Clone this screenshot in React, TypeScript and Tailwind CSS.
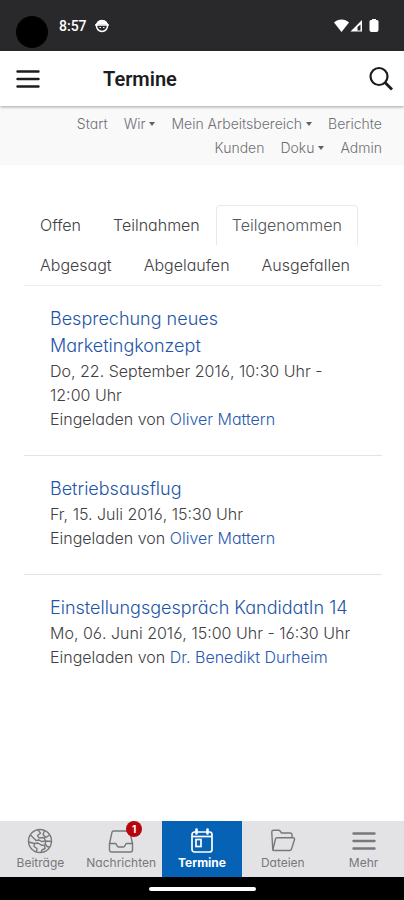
import type { ReactNode } from 'react';

const menu = [
  { label: 'Start' },
  { label: 'Wir', dropdown: true },
  { label: 'Mein Arbeitsbereich', dropdown: true },
  { label: 'Berichte' },
  { label: 'Kunden' },
  { label: 'Doku', dropdown: true },
  { label: 'Admin' },
];

const tabs = ['Offen', 'Teilnahmen', 'Teilgenommen', 'Abgesagt', 'Abgelaufen', 'Ausgefallen'];

const events = [
  { title: 'Besprechung neues Marketingkonzept', date: 'Do, 22. September 2016, 10:30 Uhr - 12:00 Uhr', host: 'Oliver Mattern' },
  { title: 'Betriebsausflug', date: 'Fr, 15. Juli 2016, 15:30 Uhr', host: 'Oliver Mattern' },
  { title: 'Einstellungsgespräch KandidatIn 14', date: 'Mo, 06. Juni 2016, 15:00 Uhr - 16:30 Uhr', host: 'Dr. Benedikt Durheim' },
];

function GlobeIcon() {
  return (
    <svg width="26" height="26" viewBox="0 0 26 26" fill="none" stroke="currentColor" strokeWidth="1.4" strokeLinejoin="round">
      <circle cx="13" cy="13" r="11.5" />
      <path d="M11 1.800l2.500 3.400-3 2.300 1.500 2.500 5-.5 1.500 3.500-4 .5-2.500-1.500-3 .5L6 9.500 3.500 7M17.500 2.500l-1.500 4 3 3 3.500-2.500" />
      <path d="M24.400 13.500l-4.900-.5-1.500 2.500 2 3 2.500.5M1.600 14l5.900 1.500 3.500-.5 3 2 3.500.5.5 3-3 1.500-1 2.400M7.500 15.500l-.5 3 3 2-.5 3.300" />
    </svg>
  );
}

function InboxIcon() {
  return (
    <svg width="26" height="26" viewBox="0 0 26 26" fill="none" stroke="currentColor" strokeWidth="1.4" strokeLinejoin="round">
      <path d="M1.500 15.500L4 4.200C4.200 3.500 4.800 3 5.500 3h15c.7 0 1.300.5 1.500 1.200l2.500 11.300v6.500a2 2 0 0 1-2 2h-19a2 2 0 0 1-2-2z" />
      <path d="M1.500 15.500H7.500c1.200 0 1.200 3.500 2.700 3.500h5.600c1.500 0 1.500-3.500 2.700-3.500h6" />
    </svg>
  );
}

function CalendarIcon() {
  return (
    <svg width="26" height="26" viewBox="0 0 26 26" fill="none" stroke="currentColor" strokeWidth="1.7">
      <rect x="3" y="4" width="20" height="20" rx="2.5" />
      <path d="M3 8.500h20" />
      <path d="M7.500 1.500v4M18.500 1.500v4" strokeWidth="2.6" strokeLinecap="round" />
      <rect x="7" y="11.500" width="5" height="7" />
    </svg>
  );
}

function FolderIcon() {
  return (
    <svg width="26" height="26" viewBox="0 0 26 26" fill="none" stroke="currentColor" strokeWidth="1.4" strokeLinejoin="round">
      <path d="M2.800 22L1.800 5V4c0-1 .7-1.700 1.700-1.700h5.200c.6 0 1 .2 1.400.7L11.500 5h8.700c1 0 1.800.8 1.800 1.800v3" />
      <path d="M2.800 22L5.500 11c.2-.8.8-1.200 1.500-1.200h16.200c1 0 1.600.8 1.300 1.700L21.500 21c-.3 1-1 1.500-1.900 1.500H4c-.7 0-1.200-.1-1.200-.5z" />
    </svg>
  );
}

function BarsIcon() {
  return (
    <svg width="26" height="26" viewBox="0 0 26 26" fill="none" stroke="currentColor" strokeWidth="2.4" strokeLinecap="round">
      <path d="M2.500 5.500h21M2.500 13h21M2.500 20.500h21" />
    </svg>
  );
}

function StatusBar() {
  return (
    <div className="flex h-[51px] shrink-0 items-center bg-[#29292b] pl-4 pr-6 text-white">
      <span className="mt-3 h-8 w-8 rounded-full bg-black" />
      <span className="ml-[11px] font-[Roboto] text-sm font-medium">8:57</span>
      <svg width="14" height="14" viewBox="0 0 14 14" className="ml-2">
        <circle cx="7" cy="7" r="5.5" fill="none" stroke="#fff" strokeWidth="1.5" />
        <path d="M1.500 5.500a5.600 5.600 0 0 1 11 0z" fill="#fff" />
        <path d="M0 6h14" stroke="#fff" strokeWidth="1.5" />
        <path d="M4.500 8.500h1.500M8 8.500h1.500" stroke="#fff" />
      </svg>
      <svg width="46" height="15" viewBox="0 0 46 15" className="ml-auto">
        <path d="M0 4.500C4 .5 11 .5 15 4.500L7.500 14z" fill="#fff" />
        <path d="M28 2v11.500H16.500z" fill="#fff" />
        <path d="M23.500 12.500V9l3-2.500v6z" fill="#29292b" />
        <path d="M38 1h4v1h1a1.500 1.500 0 0 1 1.500 1.500V12a2 2 0 0 1-2 2h-5a2 2 0 0 1-2-2V3.500A1.500 1.500 0 0 1 37 2h1z" fill="#fff" />
      </svg>
    </div>
  );
}

function NavItem({ label, active, badge, children }: { label: string; active?: boolean; badge?: number; children: ReactNode }) {
  return (
    <a
      href="#"
      className={'flex flex-1 flex-col items-center pt-[7px] text-xs leading-4 ' + (active ? 'bg-[#0562b5] font-bold text-white' : 'bg-[#e3e3e5] text-[#77787b]')}
    >
      <span className="relative">
        {children}
        {badge && (
          <span className="absolute -right-2 -top-[7px] flex h-4 w-4 items-center justify-center rounded-full bg-[#b70510] text-[10px] font-bold text-white">{badge}</span>
        )}
      </span>
      <span className="mt-px">{label}</span>
    </a>
  );
}

export default function App() {
  return (
    <div className="flex min-h-screen flex-col bg-white font-[Inter,sans-serif] [font-feature-settings:'cv11','cv03']">
      <StatusBar />

      <header className="z-10 flex h-[55px] shrink-0 items-center bg-white pl-[15px] pr-[10px] text-[#1c1c1e] shadow-[0_1px_3px_rgba(0,0,0,0.35)]">
        <button aria-label="Menü">
          <BarsIcon />
        </button>
        <h1 className="ml-[62px] font-[Roboto] text-xl font-semibold">Termine</h1>
        <button aria-label="Suche" className="ml-auto">
          <svg width="26" height="26" viewBox="0 0 26 26" fill="none" stroke="currentColor" strokeWidth="2.2">
            <circle cx="11" cy="10.5" r="8.5" />
            <path d="M17 16.5l7 7" strokeWidth="2.8" />
          </svg>
        </button>
      </header>

      <nav className="flex flex-wrap justify-end gap-x-4 bg-[#f9f9f9] pb-[5px] pl-4 pr-[22px] pt-1.5 text-sm font-light leading-6 text-[#6f7074]">
        {menu.map(m => (
          <a key={m.label} href="#" className="flex items-center gap-1">
            {m.label}
            {m.dropdown && <span className="border-x-[3px] border-t-[4px] border-x-transparent border-t-[#606165]" />}
          </a>
        ))}
      </nav>

      <main className="flex-1 pl-6 pr-[22px] pt-10">
        <div role="tablist" className="flex flex-wrap border-b border-[#eeeeef] font-light leading-6 text-[#3f4043]">
          {tabs.map(t => (
            <button
              key={t}
              role="tab"
              aria-selected={t === 'Teilgenommen'}
              className={'h-10 rounded-t border border-b-0 px-[15px] pb-0.5 ' + (t === 'Teilgenommen' ? 'border-[#e8e9ea] text-[#55565a]' : 'border-transparent')}
            >
              {t}
            </button>
          ))}
        </div>

        <ul className="divide-y divide-[#e3e3e4]">
          {events.map(e => (
            <li key={e.title} className="pb-6 pl-[26px] pr-6 pt-[19px] font-light leading-6 text-[#3f4043]">
              <h2 className="text-lg leading-[27px]">
                <a href="#" className="text-[#1d55a8]">{e.title}</a>
              </h2>
              <p>{e.date}</p>
              <p>
                Eingeladen von <a href="#" className="text-[#2858b0]">{e.host}</a>
              </p>
            </li>
          ))}
        </ul>
      </main>

      <nav className="flex h-14 shrink-0">
        <NavItem label="Beiträge"><GlobeIcon /></NavItem>
        <NavItem label="Nachrichten" badge={1}><InboxIcon /></NavItem>
        <NavItem label="Termine" active><CalendarIcon /></NavItem>
        <NavItem label="Dateien"><FolderIcon /></NavItem>
        <NavItem label="Mehr"><BarsIcon /></NavItem>
      </nav>

      <div className="flex h-[23px] shrink-0 items-center justify-center bg-black">
        <span className="h-1 w-[107px] rounded-full bg-white" />
      </div>
    </div>
  );
}
